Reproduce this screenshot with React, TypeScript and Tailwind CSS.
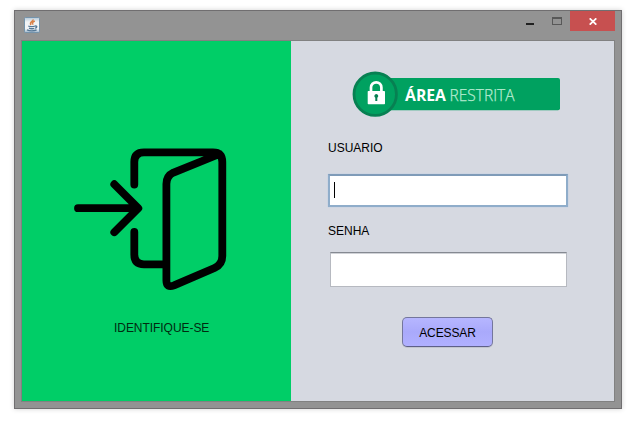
import React from 'react';

function JavaIcon() {
  return (
    <svg width="16" height="16" viewBox="0 0 16 16" className="block">
      <defs>
        <linearGradient id="tile" x1="0" y1="0" x2="0" y2="1">
          <stop offset="0" stopColor="#b3c8d8" />
          <stop offset="0.3" stopColor="#f2f4f6" />
          <stop offset="0.75" stopColor="#f1f3f6" />
          <stop offset="1" stopColor="#9bb6cb" />
        </linearGradient>
      </defs>
      <rect x="0.5" y="0.5" width="15" height="15" rx="1" fill="url(#tile)" stroke="#7593ab" />
      <path d="M8.900 2.300C10 4.200 4.600 4.900 7 8M10.800 4C8 5.300 8 6 9.200 7.600" fill="none" stroke="#d9824a" strokeWidth="1.500" />
      <path d="M4.300 9C6 9.900 9.500 9.900 10.800 9M5 11.200C7 11.900 9 11.900 10.300 11.200M11 9.200C13.500 8.300 13.300 10.800 11 11.200M3 12.900C5.500 14.100 10.500 14.100 12.600 12.900" fill="none" stroke="#557896" strokeWidth="1.300" />
    </svg>
  );
}

function TitleBar() {
  return (
    <div className="flex h-[29px] items-start">
      <div className="pl-[9px] pt-[6px]"><JavaIcon /></div>
      <div className="ml-auto mr-[6px] flex">
        <button aria-label="Minimizar" className="flex w-[26px] justify-center pt-[12px]">
          <span className="block h-[2px] w-[8px] bg-[#202020]" />
        </button>
        <button aria-label="Maximizar" className="flex w-[27px] justify-center pt-[6px]">
          <span className="block h-[8px] w-[10px] border border-t-2 border-[#585858]" />
        </button>
        <button aria-label="Fechar" className="flex h-[20px] w-[45px] items-center justify-center bg-[#c75050]">
          <svg width="8" height="7" viewBox="0 0 8 7" className="mt-[1px]">
            <path d="M0.700 0.300L7.300 6.700M7.300 0.300L0.700 6.700" stroke="#fff" strokeWidth="1.700" />
          </svg>
        </button>
      </div>
    </div>
  );
}

function DoorIcon() {
  return (
    <svg width="154" height="144" viewBox="73 147 154 144" fill="none" stroke="#000" strokeWidth="7.800" strokeLinecap="round" strokeLinejoin="round">
      <path d="M134.300 184.500V162Q134.300 152.300 144 152.300H213Q222.300 152.300 222.300 162V256Q222.300 264.500 214.500 268L174 285.300Q166.400 288.300 166.400 280.500V184Q166.400 176 173.500 172.600L219.500 154" />
      <path d="M134.300 232V254.500Q134.300 264.300 144 264.300H165" />
      <path d="M78 208.200H138M114.300 184.200L138.300 208.200L114.300 232.200" />
    </svg>
  );
}

function RestrictedBanner() {
  return (
    <svg width="210" height="48" viewBox="351 70 210 48" className="block">
      <rect x="370" y="78" width="190" height="32.300" rx="2" fill="#00a160" />
      <circle cx="375.200" cy="94.200" r="21.200" fill="#00a160" stroke="#078052" strokeWidth="2.800" />
      <path d="M371 92V87.500a5.200 5.200 0 0 1 10.400 0V92" fill="none" stroke="#fff" strokeWidth="2.700" />
      <rect x="367.700" y="91" width="17.300" height="13.200" rx="0.700" fill="#fff" />
      <path d="M376.300 94a2 2 0 0 1 1 3.700V101h-2v-3.300a2 2 0 0 1 1-3.700z" fill="#078052" />
      <text x="405" y="101" textLength="41" lengthAdjust="spacingAndGlyphs" className="fill-white font-['Open_Sans',sans-serif] text-[15.500px] font-bold">ÁREA</text>
      <text x="449.500" y="101" textLength="65" lengthAdjust="spacingAndGlyphs" className="fill-[#b5ebd0] stroke-[#b5ebd0] stroke-[0.25px] font-['Open_Sans',sans-serif] text-[15.500px] font-light">RESTRITA</text>
    </svg>
  );
}

export default function App() {
  return (
    <div className="h-[422px] w-[637px] overflow-hidden bg-white pl-[14px] pt-[10px] font-['Liberation_Sans',Arial,sans-serif] text-[12px] leading-[15px] text-black">
      <main className="h-[399px] w-[608px] border border-[#706e70] bg-[#939393] shadow-[0_0_5px_rgba(0,0,0,0.18)]">
        <TitleBar />
        <div className="mx-[6px] flex h-[362px] border border-[#818181]">
          <section className="flex w-[269px] shrink-0 flex-col bg-[#00ce67]">
            <div className="ml-[51px] mt-[106px] h-[144px]"><DoorIcon /></div>
            <p className="ml-[92px] mt-[30px] whitespace-nowrap tracking-[-0.050px] text-[#002b10]">IDENTIFIQUE-SE</p>
          </section>
          <section className="flex flex-1 flex-col bg-[#d6d9e1]">
            <div className="ml-[60px] mt-[29px]"><RestrictedBanner /></div>
            <label htmlFor="usuario" className="ml-[37px] mt-[23px]">USUARIO</label>
            <div id="usuario" className="ml-[37px] mt-[18px] flex h-[33px] w-[240px] border-2 border-[#8fadca] border-t-[#7f9bb8] bg-white pl-[4px] pt-[6px] shadow-[0_0_1px_#a8c5e5]">
              <span className="h-[16px] w-px bg-black" />
            </div>
            <label htmlFor="senha" className="ml-[37px] mt-[17px]">SENHA</label>
            <div id="senha" className="ml-[39px] mt-[13px] h-[35px] w-[237px] border border-[#b6b9c0] border-t-[#858991] bg-white shadow-[inset_0_1px_0_#d0d2d7]" />
            <button className="ml-[111px] mt-[30px] h-[30px] w-[91px] rounded-[5px] border border-[#74769c] border-b-[#5e6088] bg-linear-to-b from-[#b6b6ff] via-[#a9a9fb] to-[#b0b0ff] pt-[3px] tracking-[-0.100px] shadow-[0_1px_0_#c2c5cd]">ACESSAR</button>
          </section>
        </div>
      </main>
    </div>
  );
}
